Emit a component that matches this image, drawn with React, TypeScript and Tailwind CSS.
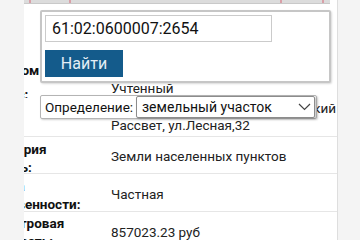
import React from 'react';

type Row = {
  label: React.ReactNode;
  value: React.ReactNode;
  h: string;
  labelCls: string;
  valueCls: string;
  border?: boolean;
};

const rows: Row[] = [
  {
    label: 'номером',
    value: '61:02:0600007:2654',
    h: 'h-[75px]',
    labelCls: 'pt-[57px]',
    valueCls: 'pt-[40px]',
  },
  {
    label: 'Статус:',
    value: 'Учтенный',
    h: 'h-[19px]',
    labelCls: 'pt-[6px]',
    valueCls: 'pt-[1px]',
  },
  {
    label: 'Адрес',
    value: (<>Ростовская область, р-н Аксайский<br />Рассвет, ул.Лесная,32</>),
    h: 'h-[39px]',
    labelCls: 'pt-[10px]',
    valueCls: 'pt-[2px]',
    border: true,
  },
  {
    label: (<>Категория<br />земель:</>),
    value: 'Земли населенных пунктов',
    h: 'h-[37px]',
    labelCls: 'pt-[3px]',
    valueCls: 'pt-[11px]',
    border: true,
  },
  {
    label: (<>Форма<br />собственности:</>),
    value: 'Частная',
    h: 'h-[38px]',
    labelCls: 'pt-[3px]',
    valueCls: 'pt-[12px]',
    border: true,
  },
  {
    label: (<>Кадастровая<br />стоимость:</>),
    value: '857023.23 руб',
    h: 'h-[40px]',
    labelCls: 'pt-[2px]',
    valueCls: 'pt-[12px]',
  },
];

const App: React.FC = () => {
  return (
    <div className="relative flex h-[240px] w-[360px] overflow-hidden bg-[#f4f4f4] font-['Roboto',sans-serif] text-[13.5px] leading-[17px] text-[#222]">
      {/* left strip */}
      <div className="w-[24px] shrink-0 bg-[#f4f4f4]" />

      {/* main panel */}
      <div className="relative w-[313px] shrink-0 overflow-hidden bg-white">
        {/* map strip */}
        <div className="h-[4px] w-[306px] border-b border-[#c9c9c9] bg-[#dcdcdc]" />
        <div className="-ml-[43px] flex flex-col">
          {rows.map((r, i) => (
            <div key={i} className={`flex ${r.h} ${r.border ? 'border-b border-[#e6e6e6]' : ''}`}>
              <div className="w-[130px] shrink-0 overflow-hidden">
                <div className={`whitespace-nowrap font-bold leading-[18px] text-[#111] ${r.labelCls}`}>
                  {r.label}
                </div>
              </div>
              <div className={`flex-1 whitespace-nowrap ${r.valueCls}`}>{r.value}</div>
            </div>
          ))}
        </div>
      </div>

      {/* right strip */}
      <div className="flex-1 border-l border-[#dedede] bg-[#f4f4f4]" />

      {/* left edge cover */}
      <div className="absolute left-0 top-0 h-full w-[24px] bg-[#f4f4f4]" />

      {/* map ticks */}
      <div className="absolute left-[29px] top-0 h-[3px] w-[2px] bg-[#d9a0a8]" />
      <div className="absolute left-[69px] top-0 h-[3px] w-[2px] bg-[#d9a0a8]" />
      <div className="absolute left-[280px] top-0 h-[3px] w-[2px] bg-[#d9a0a8]" />
      <div className="absolute left-[322px] top-0 h-[3px] w-[2px] bg-[#d9a0a8]" />

      {/* search popup */}
      <div className="absolute left-[40px] top-[10px] flex h-[73px] w-[291px] flex-col gap-[8px] rounded-[2px] border-2 border-[#c6c6c6] bg-white px-[3px] pt-[3px] shadow-[1px_1px_2px_rgba(0,0,0,0.15)]">
        <div className="flex h-[27px] w-[227px] items-center border border-[#cbcbcb] bg-white pl-[6px] text-[16px] text-[#111]">
          61:02:0600007:2654
        </div>
        <button className="flex h-[27px] w-[78px] items-center justify-center bg-[#145b8b] text-[16px] text-[#e4eef6]">
          Найти
        </button>
      </div>

      {/* definition select */}
      <div className="absolute left-[40px] top-[95px] flex h-[24px] w-[277px] items-center justify-between rounded-[2px] border border-[#b4b4b4] bg-white pl-[4px] pr-[1px] text-[14px] shadow-[1px_1px_2px_rgba(0,0,0,0.2)]">
        <span className="whitespace-nowrap text-[13.5px] text-[#111]">Определение:</span>
        <div className="flex h-[22px] w-[179px] items-center justify-between rounded-[2px] border border-[#8c8c8c] bg-white pl-[5px] pr-[3px] text-[#111] shadow-[1px_1px_2px_rgba(0,0,0,0.25)]">
          <span className="whitespace-nowrap">земельный участок</span>
          <svg width="13" height="8" viewBox="0 0 13 8" fill="none" stroke="#444" strokeWidth="1.2">
            <polyline points="1,1 6.5,6.5 12,1" />
          </svg>
        </div>
      </div>
    </div>
  );
};

export default App;
